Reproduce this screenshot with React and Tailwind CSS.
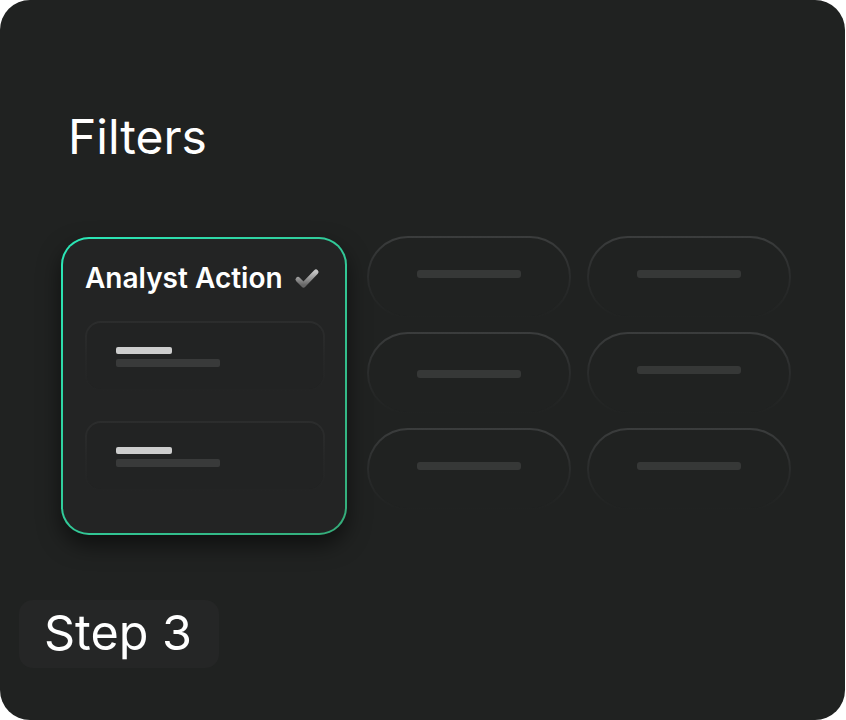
import React from "react";

function Pill({ pt = "pt-[32px]" }) {
  return (
    <div className="h-[82px] w-[204px] rounded-full p-[2px] bg-linear-to-b from-[#3b3d3d] via-[#2a2c2c] to-[#202221]">
      <div className={`h-full w-full rounded-full bg-[#202221] flex justify-center ${pt}`}>
        <div className="h-[8px] w-[104px] rounded-[3px] bg-[#363837]" />
      </div>
    </div>
  );
}

function InnerCard() {
  return (
    <div className="h-[70px] w-[240px] rounded-[16px] p-[2px] bg-linear-to-b from-[#2c2d2d] via-[#262727] to-[#232424]">
      <div className="h-full w-full rounded-[14px] bg-[#222323] pl-[29px] pt-[24px] flex flex-col gap-[5px]">
        <div className="h-[7px] w-[56px] rounded-[2px] bg-[#cdcdcd]" />
        <div className="h-[8px] w-[104px] rounded-[2px] bg-[#393a3a]" />
      </div>
    </div>
  );
}

function Check() {
  return (
    <svg width="26" height="22" viewBox="0 0 26 22" className="mt-[4px]">
      <defs>
        <linearGradient id="ck" x1="0" y1="0" x2="0" y2="1">
          <stop offset="0" stopColor="#c4c4c4" />
          <stop offset="1" stopColor="#666666" />
        </linearGradient>
      </defs>
      <path
        d="M4 11.5 L9.5 17 L22 4"
        fill="none"
        stroke="url(#ck)"
        strokeWidth="5"
        strokeLinecap="round"
        strokeLinejoin="round"
      />
    </svg>
  );
}

export default function App() {
  return (
    <div className="w-[846px] h-[720px] bg-white font-['Inter',sans-serif]">
      <div className="w-[845px] h-[720px] rounded-[30px] bg-[#202221] flex flex-col">
        <div className="pt-[113px] pl-[68px] h-[161px] text-[48px] leading-none text-white font-normal">
          Filters
        </div>
        <div className="mt-[75px] ml-[61px] flex items-start">
          <div className="mt-[1px] h-[298px] w-[286px] rounded-[28px] p-[2px] bg-linear-to-br from-[#2ae8b8] to-[#34ac79] shadow-[0_10px_22px_rgba(0,0,0,0.55)]">
            <div className="h-full w-full rounded-[26px] bg-[#232424] pl-[22px] pt-[25px]">
              <div className="flex items-start gap-[11px]">
                <span className="text-[28px] leading-none font-semibold text-white">
                  Analyst Action
                </span>
                <Check />
              </div>
              <div className="mt-[29px] flex flex-col gap-[30px]">
                <InnerCard />
                <InnerCard />
              </div>
            </div>
          </div>
          <div className="ml-[20px] grid grid-cols-2 gap-x-[16px] gap-y-[14px]">
            <Pill pt="pt-[32px]" />
            <Pill pt="pt-[32px]" />
            <Pill pt="pt-[36px]" />
            <Pill pt="pt-[32px]" />
            <Pill pt="pt-[32px]" />
            <Pill pt="pt-[32px]" />
          </div>
        </div>
        <div className="mt-[65px] ml-[19px] h-[68px] w-[200px] rounded-[14px] bg-[#252626] flex justify-center pt-[9px] pr-[2px] text-[48.5px] leading-none text-white">
          Step 3
        </div>
      </div>
    </div>
  );
}
